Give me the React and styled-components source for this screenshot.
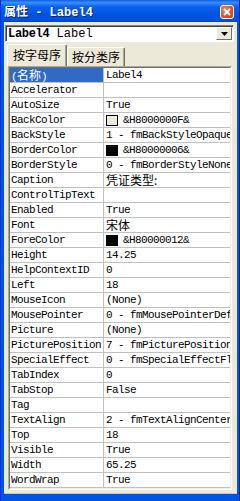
import React from "react";
import styled, { createGlobalStyle } from "styled-components";

const GlobalStyle = createGlobalStyle`
  html, body {
    margin: 0;
    padding: 0;
    background: #ece9d8;
  }
  * {
    box-sizing: border-box;
  }
`;

const MONO = `"Liberation Mono", "Noto Sans CJK SC", monospace`;
const CJK = `"Noto Sans CJK SC", "Liberation Sans", sans-serif`;

// Window frame
const Frame = styled.div`
  width: 240px;
  height: 501px;
  display: flex;
  flex-direction: column;
  background: #0054e3;
  border-left: 1px solid #0831d9;
  border-right: 1px solid #001ea0;
  overflow: hidden;
`;

const TitleBar = styled.div`
  height: 22px;
  flex: none;
  display: flex;
  align-items: center;
  justify-content: space-between;
  padding: 0 5px 0 3px;
  background: linear-gradient(
    #0a5fe8 0%,
    #3d8ef8 12%,
    #0a62f0 30%,
    #0054e3 65%,
    #0050da 90%,
    #0043c2 100%
  );
`;

const Title = styled.span`
  color: #fff;
  font-family: ${MONO};
  font-weight: bold;
  font-size: 12px;
  white-space: pre;
  text-shadow: 1px 1px 0 #0a1e80;
  margin-top: 1px;
`;

const CloseButton = styled.div`
  width: 14px;
  height: 14px;
  margin-top: 2px;
  border: 1px solid #fff;
  border-radius: 3px;
  background: radial-gradient(circle at 35% 35%, #f08c6c 0%, #e0512e 55%, #c23a18 100%);
  display: flex;
  align-items: center;
  justify-content: center;
`;

const Body = styled.div`
  flex: 1;
  margin: 0 2px 7px 3px;
  background: #ece9d8;
  display: flex;
  flex-direction: column;
  padding: 3px 3px 3px 1px;
  border-bottom: 1px solid #c9c6b6;
`;

// Object combo box
const Combo = styled.div`
  height: 17px;
  flex: none;
  display: flex;
  align-items: center;
  background: #fff;
  border-top: 1px solid #848284;
  border-left: 1px solid #848284;
  border-right: 1px solid #fff;
  border-bottom: 1px solid #fff;
  box-shadow: inset 1px 1px 0 #404040;
  padding-left: 2px;
`;

const ComboText = styled.div`
  flex: 1;
  font-family: ${MONO};
  font-size: 12px;
  white-space: pre;
  color: #000;
  overflow-x: clip;
`;

const Bold = styled.b`
  font-weight: bold;
  letter-spacing: -0.3px;
`;

const DropButton = styled.div`
  width: 16px;
  height: 13px;
  margin-right: 1px;
  background: #ece9d8;
  border-top: 1px solid #fff;
  border-left: 1px solid #fff;
  border-right: 1px solid #716f64;
  border-bottom: 1px solid #716f64;
  display: flex;
  align-items: center;
  justify-content: center;
`;

// Tabs
const TabStrip = styled.div`
  display: flex;
  align-items: flex-end;
  height: 22px;
  margin-top: 2px;
  padding-left: 2px;
  flex: none;
`;

const Tab = styled.div`
  height: ${(p) => (p.$active ? 22 : 19)}px;
  padding: 0 ${(p) => (p.$active ? 5 : 4)}px;
  font-family: ${CJK};
  font-size: 12px;
  line-height: ${(p) => (p.$active ? 19 : 18)}px;
  color: #000;
  background: #ece9d8;
  border-top: 1px solid #fff;
  border-left: 1px solid #fff;
  border-right: 1px solid #716f64;
  box-shadow: inset -1px 0 0 #aca899;
  border-top-left-radius: 2px;
  border-top-right-radius: 2px;
`;

// Property grid
const Grid = styled.div`
  flex: 1;
  margin: 0 2px 0 3px;
  border-top: 1px solid #aca899;
  border-left: 1px solid #aca899;
  border-right: 1px solid #fff;
  border-bottom: 1px solid #fff;
  display: flex;
`;

const GridInner = styled.div`
  flex: 1;
  min-width: 0;
  background: #fff;
  border-top: 1px solid #716f64;
  border-left: 1px solid #716f64;
  border-right: 1px solid #f1efe2;
  border-bottom: 1px solid #f1efe2;
`;

const Row = styled.div`
  display: grid;
  grid-template-columns: 94px minmax(0, 1fr);
  height: 15px;
  border-bottom: 1px solid #c0c0c0;
`;

const NameCell = styled.div`
  height: 14px;
  padding-left: 1px;
  border-right: 1px solid #c0c0c0;
  background: ${(p) => (p.$selected ? "#316ac5" : "#fff")};
  color: ${(p) => (p.$selected ? "#fff" : "#000")};
  font-family: ${MONO};
  font-size: 11px;
  letter-spacing: -0.6px;
  line-height: 14px;
  white-space: pre;
`;

const ValueCell = styled.div`
  height: 14px;
  padding-left: 2px;
  display: flex;
  align-items: center;
  gap: 5px;
  font-family: ${MONO};
  font-size: 11px;
  letter-spacing: -0.6px;
  line-height: 14px;
  white-space: pre;
  overflow-x: clip;
  color: #000;
`;

const Cjk = styled.span`
  font-family: ${CJK};
  font-size: 12px;
  letter-spacing: 0;
  line-height: 14px;
  font-weight: ${(p) => (p.$bold ? "bold" : "normal")};
`;

const Swatch = styled.span`
  flex: none;
  width: 12px;
  height: 11px;
  border: 1px solid #000;
  background: ${(p) => p.$color};
`;

const rows = [
  { name: "(名称)", value: "Label4", selected: true },
  { name: "Accelerator", value: "" },
  { name: "AutoSize", value: "True" },
  { name: "BackColor", value: "&H8000000F&", swatch: "#ece9d8" },
  { name: "BackStyle", value: "1 - fmBackStyleOpaque" },
  { name: "BorderColor", value: "&H80000006&", swatch: "#000" },
  { name: "BorderStyle", value: "0 - fmBorderStyleNone" },
  { name: "Caption", value: "凭证类型:", cjk: true },
  { name: "ControlTipText", value: "" },
  { name: "Enabled", value: "True" },
  { name: "Font", value: "宋体", cjk: true },
  { name: "ForeColor", value: "&H80000012&", swatch: "#000" },
  { name: "Height", value: "14.25" },
  { name: "HelpContextID", value: "0" },
  { name: "Left", value: "18" },
  { name: "MouseIcon", value: "(None)" },
  { name: "MousePointer", value: "0 - fmMousePointerDefault" },
  { name: "Picture", value: "(None)" },
  { name: "PicturePosition", value: "7 - fmPicturePositionAboveCenter" },
  { name: "SpecialEffect", value: "0 - fmSpecialEffectFlat" },
  { name: "TabIndex", value: "0" },
  { name: "TabStop", value: "False" },
  { name: "Tag", value: "" },
  { name: "TextAlign", value: "2 - fmTextAlignCenter" },
  { name: "Top", value: "18" },
  { name: "Visible", value: "True" },
  { name: "Width", value: "65.25" },
  { name: "WordWrap", value: "True" },
];

function renderName(row) {
  if (row.selected) {
    return (
      <>
        (<Cjk>名称</Cjk>)
      </>
    );
  }
  return row.name;
}

export default function App() {
  return (
    <>
      <GlobalStyle />
      <Frame>
        <TitleBar>
          <Title>
            <Cjk $bold>属性</Cjk>
            {" - Label4"}
          </Title>
          <CloseButton>
            <svg width="8" height="8" viewBox="0 0 8 8">
              <path d="M1 1 L7 7 M7 1 L1 7" stroke="#fff" strokeWidth="1.8" />
            </svg>
          </CloseButton>
        </TitleBar>

        <Body>
          <Combo>
            <ComboText>
              <Bold>Label4</Bold> Label
            </ComboText>
            <DropButton>
              <svg width="7" height="4" viewBox="0 0 7 4">
                <path d="M0 0 H7 L3.5 4 Z" fill="#000" />
              </svg>
            </DropButton>
          </Combo>

          <TabStrip>
            <Tab $active>按字母序</Tab>
            <Tab>按分类序</Tab>
          </TabStrip>

          <Grid>
            <GridInner>
              {rows.map((row) => (
                <Row key={row.name}>
                  <NameCell $selected={row.selected}>{renderName(row)}</NameCell>
                  <ValueCell>
                    {row.swatch && <Swatch $color={row.swatch} />}
                    {row.cjk ? <Cjk>{row.value}</Cjk> : row.value}
                  </ValueCell>
                </Row>
              ))}
            </GridInner>
          </Grid>
        </Body>
      </Frame>
    </>
  );
}
